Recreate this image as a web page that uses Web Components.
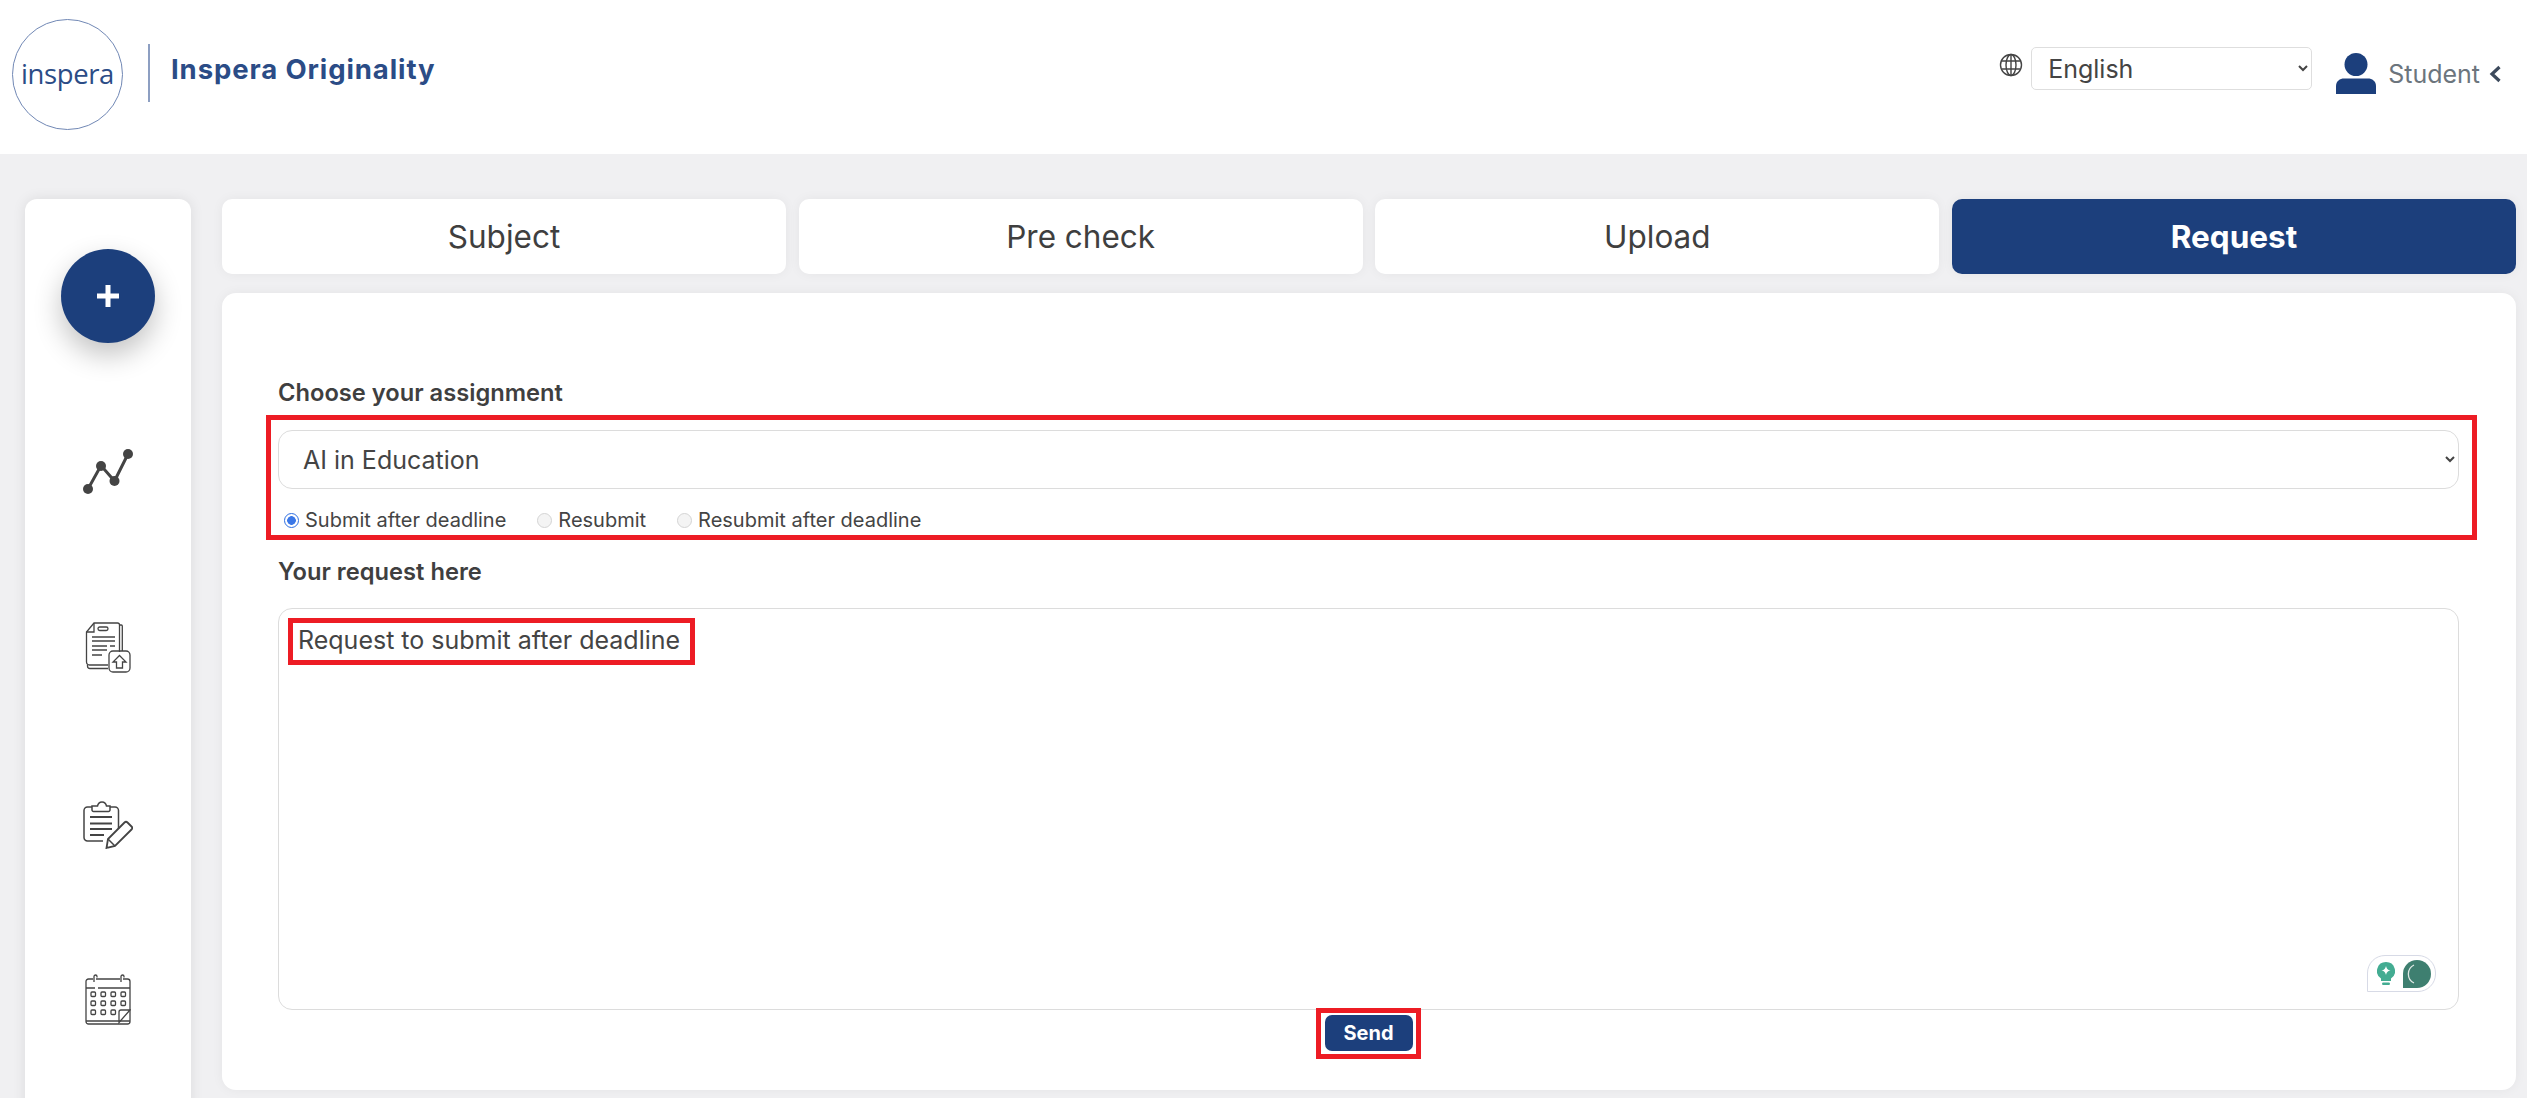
<!DOCTYPE html>
<html lang="en">
<head>
<meta charset="utf-8">
<title>Inspera Originality</title>
<style>
    html, body { margin: 0; height: 100%; overflow: hidden; }
    body { background: #f0f0f2; font-family: Inter, "Liberation Sans", sans-serif; color: #3f3f3f; }
</style>
</head>
<body>
<app-page></app-page>

<script>
const NAVY = "#1c3f7c";

class AppHeader extends HTMLElement {
    constructor() {
        super();
        this.attachShadow({ mode: "open" });
        this.shadowRoot.innerHTML = `
        <style>
            :host { display: flex; align-items: center; height: 154px; background: #fff; padding: 0 25px 0 12px; box-sizing: border-box; }
            #logo { width: 111px; height: 111px; box-sizing: border-box; border: 1px solid #7188b5; border-radius: 50%; display: flex; justify-content: center; align-items: center; color: #2b4c86; font: 400 27.500px/1 "Open Sans", sans-serif; letter-spacing: -0.4px; margin-top: -6px; }
            #bar { width: 2px; height: 58px; background: #8d9fc2; margin: -8px 21px 0 25px; }
            #name { font: 700 27.500px/1 Inter, sans-serif; color: #2b4c86; margin-top: -14px; letter-spacing: 0.9px; }
            #right { margin-left: auto; display: flex; align-items: flex-start; height: 48px; margin-top: -12px; }
            #globe { width: 24px; height: 24px; margin: 6px 8px 0 0; }
            select { width: 281px; height: 43px; box-sizing: border-box; border: 1px solid #dedede; border-radius: 5px; background: #fff; color: #444; font: 400 25px Inter, sans-serif; padding: 0 12px; }
            #user { width: 40px; height: 41px; margin: 6px 12px 0 24px; }
            #role { font: 400 25px/1 Inter, sans-serif; color: #6c757d; margin-top: 15px; }
            #chev { width: 13px; height: 18px; margin: 18px 0 0 9px; }
        </style>
        <div id="logo">inspera</div>
        <div id="bar"></div>
        <div id="name">Inspera Originality</div>
        <div id="right">
            <svg id="globe" viewBox="0 0 24 24" fill="none" stroke="#444" stroke-width="1.4">
                <circle cx="12" cy="12" r="10.5"/>
                <ellipse cx="12" cy="12" rx="5" ry="10.5"/>
                <path d="M12 1.5v21M2.5 8h19M2.5 16h19"/>
            </svg>
            <select><option>English</option></select>
            <svg id="user" viewBox="0 0 40 41" fill="${NAVY}">
                <circle cx="20" cy="11.5" r="11.5"/>
                <path d="M0 41v-8c0-5 4-7.500 8-7.500h24c4 0 8 2.500 8 7.500v8z"/>
            </svg>
            <span id="role">Student</span>
            <svg id="chev" viewBox="0 0 13 18" fill="none" stroke="#3d4a5c" stroke-width="3.200">
                <path d="M10.500 2L3 9l7.500 7"/>
            </svg>
        </div>
        `;
    }
}

class SideNav extends HTMLElement {
    constructor() {
        super();
        this.attachShadow({ mode: "open" });
        this.shadowRoot.innerHTML = `
        <style>
            :host { display: flex; flex-direction: column; align-items: center; width: 166px; flex: none; height: 1000px; background: #fff; border-radius: 12px; box-shadow: 0 0 14px rgba(0,0,0,.09); padding-top: 50px; box-sizing: border-box; }
            #add { width: 94px; height: 94px; border-radius: 50%; background: ${NAVY}; box-shadow: 0 12px 28px rgba(0,0,0,.24); display: flex; align-items: center; justify-content: center; margin-left: -1px; }
            #add svg { width: 22px; height: 22px; }
            svg.nav { display: block; stroke: #444; fill: none; }
            #chart { width: 50px; height: 46px; margin-top: 106px; }
            #doc { width: 46px; height: 52px; margin-top: 127px; }
            #note { width: 50px; height: 50px; margin-top: 125px; }
            #cal { width: 46px; height: 52px; margin-top: 125px; }
        </style>
        <div id="add">
            <svg viewBox="0 0 22 22"><path d="M8.500 0h5v8.500H22v5h-8.500V22h-5v-8.500H0v-5h8.500z" fill="#fff"/></svg>
        </div>
        <svg class="nav" id="chart" viewBox="0 0 50 46" stroke-width="3">
            <path d="M5 40L18 16.500 31.500 32 45 5"/>
            <g fill="#444" stroke="none">
                <circle cx="5" cy="40" r="5"/><circle cx="18" cy="17" r="5"/>
                <circle cx="31.500" cy="32" r="5"/><circle cx="45" cy="5" r="5"/>
            </g>
        </svg>
        <svg class="nav" id="doc" viewBox="0 0 46 52" stroke-width="1.300">
            <path d="M23 43H4.500a3 3 0 0 1-3-3V10L9 1h23.500a2 2 0 0 1 2 2v27"/>
            <path d="M2.500 42.500v1.500a2.500 2.500 0 0 0 2.500 2.500h18M34.500 3h1.800a1 1 0 0 1 1 1v25"/>
            <path d="M9 1v9H1.500"/>
            <rect x="13" y="5" width="10" height="3.500" rx="1.700"/>
            <path d="M7 15h23M7 19h23M7 24h15M25 24h5M7 28h15M7 33h10" stroke-width="1.500"/>
            <rect x="24" y="29" width="21" height="21" rx="4"/>
            <path d="M34.500 33.500l6.500 6.500h-3.500v6h-6v-6H28z"/>
        </svg>
        <svg class="nav" id="note" viewBox="0 0 50 50" stroke-width="1.500">
            <path d="M9 8H4.500A3.500 3.500 0 0 0 1 11.500v27A3.500 3.500 0 0 0 4.500 42H20M27 8h5a3.500 3.500 0 0 1 3.500 3.500V30"/>
            <path d="M9 11V7h5.500c1-5.500 8-5.500 9 0H27v4a1.500 1.500 0 0 1-1.500 1.500h-15A1.500 1.500 0 0 1 9 11z"/>
            <path d="M7 18h22M7 24.500h22M7 30h22M7 36h14" stroke-width="2"/>
            <path d="M25 48.500l-1.500.5 1.500-9L41.500 23.500c1-1 2-1 3 0l4 4c1 1 1 2 0 3L32 47z" stroke-width="1.800"/>
            <path d="M25 40l7 7" stroke-width="1.500"/>
        </svg>
        <svg class="nav" id="cal" viewBox="0 0 46 52" stroke-width="1.300">
            <path d="M8 5H3.500A2.500 2.500 0 0 0 1 7.500v40A2.500 2.500 0 0 0 3.500 50h39a2.500 2.500 0 0 0 2.500-2.500v-40A2.500 2.500 0 0 0 42.500 5H38M11 5h24"/>
            <path d="M1 14h9M13 14h32M1 47h44" />
            <path d="M9 8V2.500a1.500 1.500 0 0 1 3 0v1M36 8V2.500a1.500 1.500 0 0 1 3 0v1"/>
            <g>
                <rect x="6" y="18" width="4.500" height="4.500" rx="1"/><rect x="16" y="18" width="4.500" height="4.500" rx="1"/><rect x="26" y="18" width="4.500" height="4.500" rx="1"/><rect x="36" y="18" width="4.500" height="4.500" rx="1"/>
                <rect x="6" y="27" width="4.500" height="4.500" rx="1"/><rect x="16" y="27" width="4.500" height="4.500" rx="1"/><rect x="26" y="27" width="4.500" height="4.500" rx="1"/><rect x="36" y="27" width="4.500" height="4.500" rx="1"/>
                <rect x="6" y="36" width="4.500" height="4.500" rx="1"/><rect x="16" y="36" width="4.500" height="4.500" rx="1"/><rect x="26" y="36" width="4.500" height="4.500" rx="1"/>
            </g>
            <path d="M45 36L34 48.500V38a2 2 0 0 1 2-2z"/>
        </svg>
        `;
    }
}

class StepTab extends HTMLElement {
    constructor() {
        super();
        this.attachShadow({ mode: "open" });
        this.shadowRoot.innerHTML = `
        <style>
            :host { display: flex; align-items: center; justify-content: center; background: #fff; border-radius: 10px; height: 75px; font: 400 31.500px Inter, sans-serif; color: #3f3f3f; box-shadow: 0 0 12px rgba(0,0,0,.05); }
            :host([active]) { background: ${NAVY}; color: #fff; font-weight: 700; }
        </style>
        <slot></slot>
        `;
    }
}

// red annotation drawn over whatever it wraps
class RedMark extends HTMLElement {
    constructor() {
        super();
        this.attachShadow({ mode: "open" });
        this.shadowRoot.innerHTML = `
        <style>
            :host { display: block; position: relative; }
            #frame { position: absolute; inset: var(--mark-inset, 0); border: 5px solid #ed1c24; pointer-events: none; }
        </style>
        <slot></slot>
        <div id="frame"></div>
        `;
    }
}

class RadioOption extends HTMLElement {
    constructor() {
        super();
        this.attachShadow({ mode: "open" });
        const on = this.hasAttribute("checked");
        this.shadowRoot.innerHTML = `
        <style>
            :host { display: inline-flex; align-items: center; font: 400 20px/1 Inter, sans-serif; color: #444; }
            #dot { width: 15px; height: 15px; box-sizing: border-box; border-radius: 50%; margin-right: 6px; border: 1.500px solid #d4d4d4; background: #f4f4f4; }
            #dot.on { border-color: #2f6fe0; background: radial-gradient(circle, #3b78e7 0 4px, #fff 4.600px); }
        </style>
        <span id="dot" class="${on ? "on" : ""}"></span><slot></slot>
        `;
    }
}

class RequestForm extends HTMLElement {
    constructor() {
        super();
        this.attachShadow({ mode: "open" });
        this.shadowRoot.innerHTML = `
        <style>
            :host { display: flex; flex-direction: column; flex: 1; background: #fff; border-radius: 14px; padding: 87px 57px 0 56px; box-sizing: border-box; box-shadow: 0 0 12px rgba(0,0,0,.05); }
            label { font: 600 23.700px/26px Inter, sans-serif; color: #3f3f3f; display: block; }
            select { display: block; width: 100%; height: 59px; box-sizing: border-box; border: 1px solid #dcdcdc; border-radius: 14px; background: #fff; color: #444; font: 400 25px Inter, sans-serif; padding: 0 20px; }
            #pick { margin-top: 24px; }
            #radios { display: flex; gap: 31px; margin: 21px 0 0 6px; height: 20px; align-items: center; }
            #ask { margin-top: 29px; }
            #area { position: relative; height: 402px; box-sizing: border-box; margin-top: 23px; border: 1px solid #dcdcdc; border-radius: 14px; padding: 16px 19px; font: 400 25px/30px Inter, sans-serif; color: #444; }
            #typed { display: inline-block; --mark-inset: -7px -15px -10px -10px; }
            #assist { position: absolute; right: 22px; bottom: 17px; width: 69px; height: 37px; box-sizing: border-box; border: 1px solid #d7dae6; border-radius: 18px 18px 18px 0; display: flex; align-items: center; gap: 8px; padding-left: 9px; background: #fff; }
            #foot { display: flex; justify-content: center; margin-top: 5px; }
            #send { --mark-inset: -7px -8px -8px -9px; }
            button { display: block; width: 88px; height: 36px; border: 0; border-radius: 7px; background: ${NAVY}; color: #fff; font: 700 20px Inter, sans-serif; padding: 0; }
        </style>
        <label>Choose your assignment</label>
        <red-mark id="pick" style="--mark-inset:-15px -17.500px -51px -12.500px">
            <select><option>AI in Education</option></select>
        </red-mark>
        <div id="radios">
            <radio-option checked>Submit after deadline</radio-option>
            <radio-option>Resubmit</radio-option>
            <radio-option>Resubmit after deadline</radio-option>
        </div>
        <label id="ask">Your request here</label>
        <div id="area">
            <red-mark id="typed">Request to submit after deadline</red-mark>
            <div id="assist">
                <svg width="18" height="23" viewBox="0 0 18 23">
                    <path d="M9 0a9 9 0 0 1 5 16.500V19H4v-2.500A9 9 0 0 1 9 0z" fill="#43ac92"/>
                    <path d="M9 4c.8 3 1.500 3.700 4.500 4.500C10.500 9.300 9.800 10 9 13c-.8-3-1.500-3.700-4.500-4.500C7.500 7.700 8.200 7 9 4z" fill="#fff"/>
                    <rect x="5" y="20.500" width="8" height="2.500" rx="1.200" fill="#43ac92"/>
                </svg>
                <svg width="28" height="28" viewBox="0 0 28 28">
                    <path d="M14 0a14 14 0 0 1 0 28H0V14A14 14 0 0 1 14 0z" fill="#3e7f70"/>
                    <path d="M11 5a10 10 0 0 0 0 18" fill="none" stroke="#dfe8e5" stroke-width="1.300"/>
                </svg>
            </div>
        </div>
        <div id="foot">
            <red-mark id="send"><button>Send</button></red-mark>
        </div>
        `;
    }
}

class AppPage extends HTMLElement {
    constructor() {
        super();
        this.attachShadow({ mode: "open" });
        this.shadowRoot.innerHTML = `
        <style>
            :host { display: block; height: 100vh; overflow: hidden; }
            #body { display: flex; gap: 31px; padding: 45px 11px 0 25px; height: 944px; box-sizing: border-box; }
            #main { flex: 1; display: flex; flex-direction: column; gap: 19px; height: 891px; min-width: 0; }
            #steps { display: grid; grid-template-columns: repeat(4, 1fr); gap: 12.700px; }
        </style>
        <app-header></app-header>
        <div id="body">
            <side-nav></side-nav>
            <div id="main">
                <div id="steps">
                    <step-tab>Subject</step-tab>
                    <step-tab>Pre check</step-tab>
                    <step-tab>Upload</step-tab>
                    <step-tab active>Request</step-tab>
                </div>
                <request-form></request-form>
            </div>
        </div>
        `;
    }
}

customElements.define("app-header", AppHeader);
customElements.define("side-nav", SideNav);
customElements.define("step-tab", StepTab);
customElements.define("red-mark", RedMark);
customElements.define("radio-option", RadioOption);
customElements.define("request-form", RequestForm);
customElements.define("app-page", AppPage);
</script>
</body>
</html>
